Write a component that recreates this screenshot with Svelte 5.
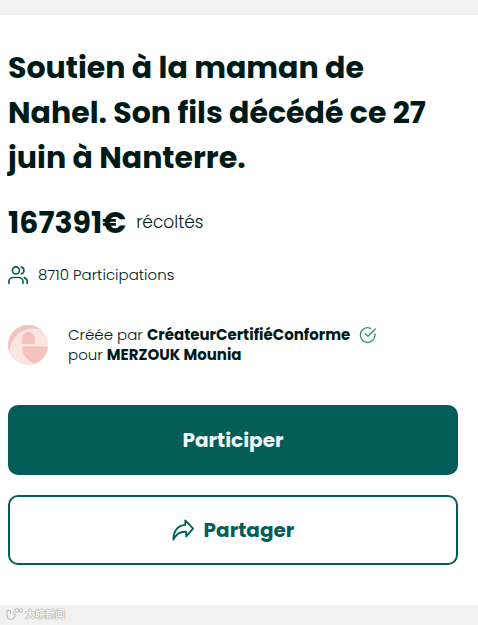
<script lang="ts">
	let title = 'Soutien à la maman de Nahel. Son fils décédé ce 27 juin à Nanterre.';
	let amount = 167391;
	let participations = 8710;
	let creator = 'CréateurCertifiéConforme';
	let beneficiary = 'MERZOUK Mounia';
</script>

<div class="page">
	<main class="card">
		<h1 class="title">{title}</h1>

		<p class="collected">
			<strong class="amount">{amount}€</strong>
			<span class="collected-label">récoltés</span>
		</p>

		<p class="participations">
			<svg class="users-icon" viewBox="0 0 24 24" aria-hidden="true">
				<circle cx="9.5" cy="6.5" r="4.2" />
				<path d="M1 22v-2a5 5 0 0 1 5-5h7a5 5 0 0 1 5 5v2" />
				<path d="M16 2.5a4.2 4.2 0 0 1 0 8.1" />
				<path d="M19.5 15.2a4.8 4.8 0 0 1 3.5 4.6v2.2" />
			</svg>
			<span>{participations} Participations</span>
		</p>

		<section class="organizer">
			<svg class="avatar" viewBox="0 0 40 40" aria-hidden="true">
				<circle cx="20" cy="20" r="20" fill="#fbe4e1" />
				<path d="M1.500 27.500A20 20 0 0 1 34 5.700C24 0 3.500 4 1.500 27.500Z" fill="#f6c1bb" />
				<path d="M14 19v-4c0-5 3-8 6.500-8S27 10 27 15v4z" fill="#f6c1bb" />
				<path d="M14 21.500h25.900A20 20 0 0 1 26.500 38.900C19 36 14.500 30 14 21.500Z" fill="#f6c1bb" />
			</svg>
			<div class="organizer-text">
				<p class="organizer-line">
					<span>Créée par <strong>{creator}</strong></span>
					<svg class="check-icon" viewBox="0 0 24 24" aria-label="Vérifié" role="img">
						<path d="M22.500 10.500v1.500a11 11 0 1 1-6.500-10" />
						<path d="M23 3 12 14l-4-4" />
					</svg>
				</p>
				<p class="organizer-line">
					<span>pour <strong>{beneficiary}</strong></span>
				</p>
			</div>
		</section>

		<div class="actions">
			<button type="button" class="btn btn-primary">Participer</button>
			<button type="button" class="btn btn-outline">
				<svg class="share-icon" viewBox="0 0 24 24" aria-hidden="true">
					<path d="M14.500 1.500 23 10.500 15.500 19v-5C9 13.500 4.500 16.500 1.500 22.500 1.500 13.500 6 7 14.500 6.500Z" />
				</svg>
				<span>Partager</span>
			</button>
		</div>
	</main>

	<footer class="source">
		<svg class="source-logo" viewBox="0 0 18 12" aria-hidden="true">
			<path d="M1 2.500h3.500v3M1 2.500v5a4 4 0 0 0 8 0V5.500L6.500 3.500" />
			<circle cx="11" cy="2.5" r="1.8" />
			<circle cx="15" cy="2.5" r="1.8" />
		</svg>
		<span>大皖新闻</span>
	</footer>
</div>

<style>
	:global(body) {
		margin: 0;
		background: #f1f1f1;
	}

	.page {
		padding-top: 15px;
		background: #f1f1f1;
		color: #001a17;
		font-family: Poppins, Inter, 'Noto Sans', sans-serif;
	}

	.card {
		padding: 30px 20px 40px 8px;
		background: #fff;
	}

	p {
		margin: 0;
	}

	.title {
		margin: 0;
		font-size: 30px;
		font-weight: 700;
		line-height: 45px;
	}

	.collected {
		display: flex;
		align-items: center;
		gap: 10px;
		margin-top: 20px;
		line-height: 45px;
	}

	.amount {
		font-size: 30px;
		font-weight: 700;
	}

	.collected-label {
		font-size: 17px;
		font-weight: 300;
	}

	.participations {
		display: flex;
		align-items: center;
		gap: 10px;
		margin-top: 20px;
		font-size: 15px;
		font-weight: 300;
		line-height: 20px;
	}

	.users-icon {
		width: 20px;
		height: 20px;
		fill: none;
		stroke: #055d59;
		stroke-width: 2;
		stroke-linecap: round;
		stroke-linejoin: round;
	}

	.organizer {
		display: flex;
		align-items: center;
		gap: 20px;
		margin-top: 40px;
	}

	.avatar {
		flex: none;
		width: 40px;
		height: 40px;
	}

	.organizer-text {
		font-size: 15px;
		font-weight: 300;
		line-height: 20px;
	}

	.organizer-text strong {
		font-weight: 700;
	}

	.organizer-line {
		display: flex;
		align-items: center;
		gap: 10px;
	}

	.check-icon {
		flex: none;
		width: 16px;
		height: 16px;
		fill: none;
		stroke: #2f9563;
		stroke-width: 2;
		stroke-linecap: round;
		stroke-linejoin: round;
		overflow: visible;
	}

	.actions {
		display: flex;
		flex-direction: column;
		gap: 20px;
		margin-top: 40px;
	}

	.btn {
		display: flex;
		align-items: center;
		justify-content: center;
		gap: 10px;
		padding: 18px;
		border: 2px solid #055d59;
		border-radius: 10px;
		font-family: inherit;
		font-size: 20px;
		font-weight: 700;
		line-height: 30px;
		cursor: pointer;
	}

	.btn-primary {
		background: #055d59;
		color: #f1f5f5;
	}

	.btn-outline {
		background: #fff;
		color: #055d59;
	}

	.share-icon {
		width: 22px;
		height: 22px;
		fill: none;
		stroke: currentColor;
		stroke-width: 2;
		stroke-linejoin: round;
	}

	.source {
		display: flex;
		align-items: center;
		gap: 1px;
		padding: 1px 6px 3px;
		color: #fafafa;
		font-family: 'Noto Sans CJK SC', sans-serif;
		font-size: 10px;
		font-weight: 700;
		line-height: 16px;
		text-shadow: 0 0 1px #777, 0 0 1px #999;
	}

	.source-logo {
		width: 18px;
		height: 12px;
		fill: none;
		stroke: #b8b8b8;
		stroke-width: 1;
	}
</style>
